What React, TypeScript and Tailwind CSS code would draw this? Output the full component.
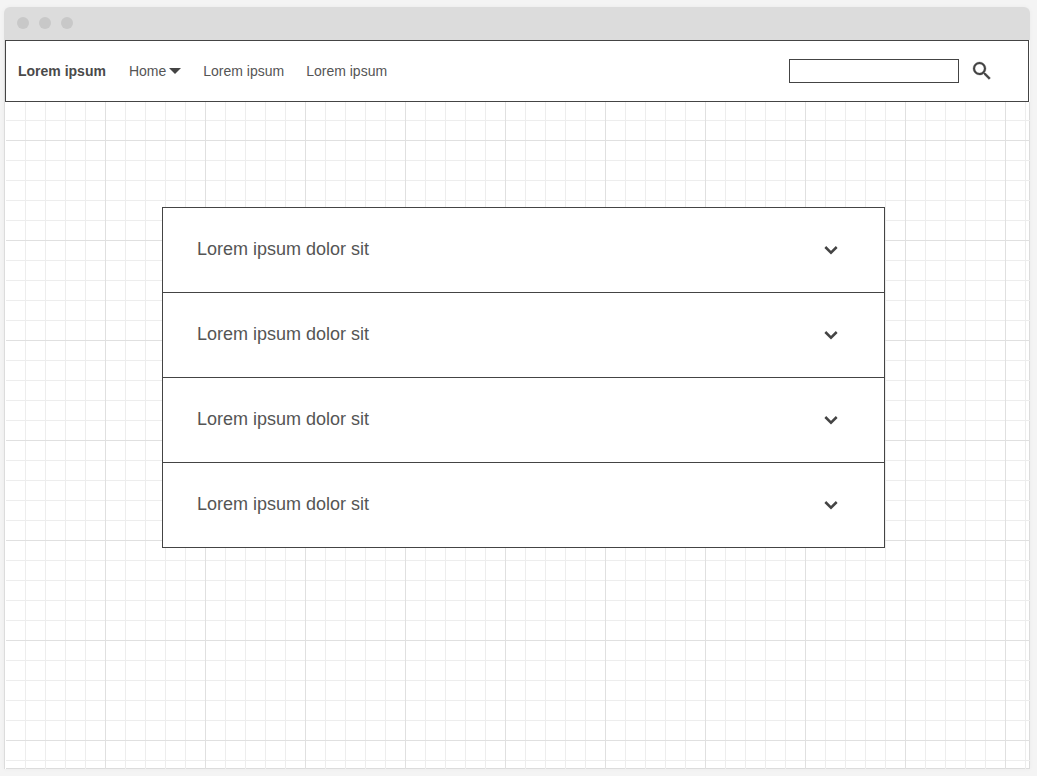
import { useState } from "react";

const items = [
  "Lorem ipsum dolor sit",
  "Lorem ipsum dolor sit",
  "Lorem ipsum dolor sit",
  "Lorem ipsum dolor sit",
];

function SearchIcon() {
  return (
    <svg viewBox="0 0 24 24" className="size-6 text-[#444]" fill="currentColor" aria-hidden="true">
      <path
        stroke="currentColor"
        strokeWidth="0.3"
        d="M15.5 14h-.79l-.28-.27A6.471 6.471 0 0 0 16 9.5 6.5 6.5 0 1 0 9.5 16c1.61 0 3.09-.59 4.23-1.57l.27.28v.79l5 4.99L20.49 19l-4.99-5zm-6 0C7.01 14 5 11.99 5 9.5S7.01 5 9.5 5 14 7.01 14 9.5 11.99 14 9.5 14z"
      />
    </svg>
  );
}

function ChevronIcon() {
  return (
    <svg viewBox="0 0 14 10" className="h-[10px] w-[14px] text-[#444]" fill="none" stroke="currentColor" strokeWidth="2.5" aria-hidden="true">
      <path d="M1.3 2 7 7.7 12.7 2" />
    </svg>
  );
}

function NavBar() {
  return (
    <nav className="mr-px flex h-[62px] items-center border border-[#444] bg-white pr-[34px] pl-3 text-sm">
      <a href="#" className="mr-[23px] font-bold text-[#4a4a4a]">
        Lorem ipsum
      </a>
      <div className="flex items-center gap-[22px]">
        <button type="button" className="flex items-center gap-[3px]">
          Home
          <svg viewBox="0 0 12 6" className="h-[6px] w-[12px] text-[#444]" fill="currentColor" aria-hidden="true">
            <path d="M0 0h12L6 6z" />
          </svg>
        </button>
        <a href="#">Lorem ipsum</a>
        <a href="#">Lorem ipsum</a>
      </div>
      <form className="ml-auto flex items-center gap-[11px]" onSubmit={(e) => e.preventDefault()}>
        <input
          type="search"
          aria-label="Search"
          className="h-6 w-[170px] appearance-none border border-[#444] bg-white px-2 outline-none"
        />
        <button type="submit" aria-label="Submit search">
          <SearchIcon />
        </button>
      </form>
    </nav>
  );
}

function Accordion() {
  const [open, setOpen] = useState(-1);
  return (
    <div className="divide-y divide-[#444] border border-[#444] bg-white">
      {items.map((title, i) => (
        <section key={i}>
          <h3>
            <button
              type="button"
              aria-expanded={open === i}
              onClick={() => setOpen(open === i ? -1 : i)}
              className="flex h-[84px] w-full items-center justify-between pr-[46px] pl-[34px] text-left text-lg"
            >
              <span className="pb-0.5">{title}</span>
              <ChevronIcon />
            </button>
          </h3>
          {open === i && <p className="px-[34px] pb-6 text-sm">{title}</p>}
        </section>
      ))}
    </div>
  );
}

export default function App() {
  return (
    <div className="flex min-h-screen flex-col bg-[#f4f4f4] pt-[7px] pr-[7px] pb-[7px] pl-1 font-['Liberation_Sans',Arial,sans-serif] text-[#555]">
      <div className="flex grow flex-col overflow-hidden rounded-t-md shadow-[0_0_5px_rgba(0,0,0,0.04)]">
        <header className="flex h-[33px] items-center gap-[10px] bg-[#dcdcdc] px-[13px] pb-px">
          <span className="size-3 rounded-full bg-[#c8c8c8]" />
          <span className="size-3 rounded-full bg-[#c8c8c8]" />
          <span className="size-3 rounded-full bg-[#c8c8c8]" />
        </header>
        <div className="flex grow flex-col border-l border-[#dcdcdc] bg-white">
          <NavBar />
          <main className="ml-px grow bg-[linear-gradient(#e0e0e0_1px,transparent_1px),linear-gradient(90deg,#e0e0e0_1px,transparent_1px),linear-gradient(#ededed_1px,transparent_1px),linear-gradient(90deg,#ededed_1px,transparent_1px),linear-gradient(270deg,#dcdcdc_1px,transparent_1px),linear-gradient(0deg,#dcdcdc_1px,transparent_1px)] bg-size-[100px_100px,100px_100px,20px_20px,20px_20px,100%_100%,100%_100%] bg-position-[0_38px,99px_0,0_18px,19px_0,0_0,0_0] pt-[105px] pr-[145px] pb-12 pl-[156px]">
            <Accordion />
          </main>
        </div>
      </div>
    </div>
  );
}
